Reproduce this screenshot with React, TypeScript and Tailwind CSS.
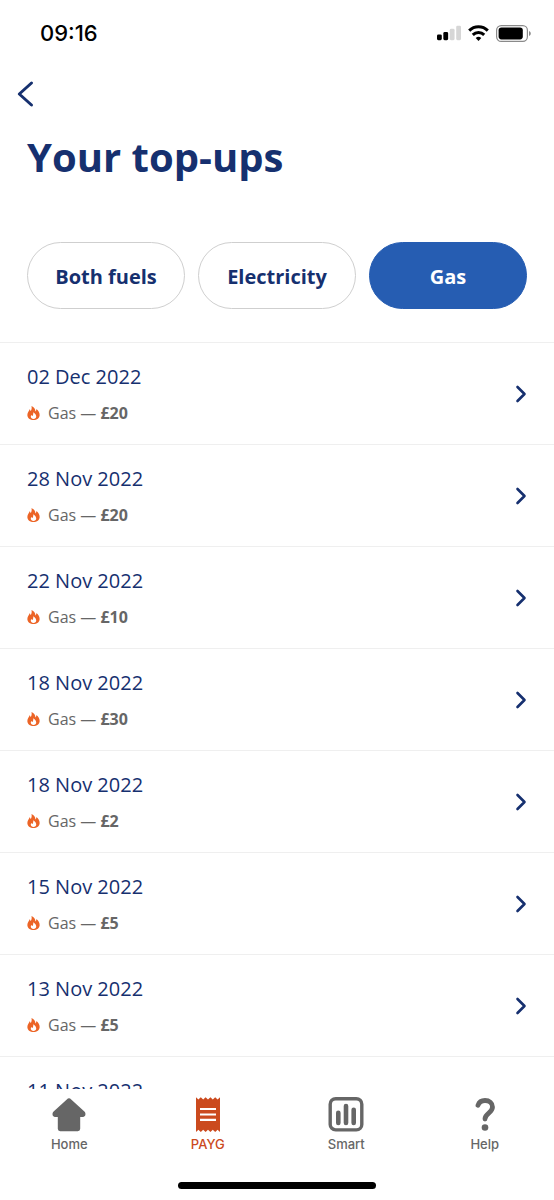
import { useState } from "react";
import clsx from "clsx";

const topUps = [
  { date: "02 Dec 2022", amount: "£20" },
  { date: "28 Nov 2022", amount: "£20" },
  { date: "22 Nov 2022", amount: "£10" },
  { date: "18 Nov 2022", amount: "£30" },
  { date: "18 Nov 2022", amount: "£2" },
  { date: "15 Nov 2022", amount: "£5" },
  { date: "13 Nov 2022", amount: "£5" },
  { date: "11 Nov 2022", amount: "£10" },
];

const filters = ["Both fuels", "Electricity", "Gas"];

function StatusBar() {
  return (
    <div className="flex h-[66px] shrink-0 items-center justify-between pr-[23px] pl-10 font-['Inter',sans-serif] text-black">
      <span className="text-[22px] leading-7 font-medium">09:16</span>
      <div className="flex items-center gap-[7px]">
        <svg width="24" height="16" viewBox="0 0 25 16">
          <rect x="0" y="9.5" width="5" height="6" rx="1.4" />
          <rect x="6.6" y="7" width="5" height="8.5" rx="1.4" />
          <rect x="13.3" y="3.7" width="5" height="11.8" rx="1.4" fill="#d6d6d6" />
          <rect x="20" y="0.4" width="5" height="15.1" rx="1.4" fill="#d6d6d6" />
        </svg>
        <svg width="21" height="16" viewBox="0 0 21 16" fill="none" stroke="#000" strokeWidth="3">
          <path d="M1.2 5.600a13.200 13.200 0 0 1 18.600 0" />
          <path d="M4.800 9.900a8.200 8.200 0 0 1 11.400 0" />
          <path d="M10.500 15.900 7.700 13a4 4 0 0 1 5.600 0z" fill="#000" stroke="none" />
        </svg>
        <svg width="35" height="17" viewBox="0 0 35 17">
          <rect x="0.6" y="0.6" width="30.8" height="15.8" rx="4.6" fill="none" stroke="#8a8a8a" strokeWidth="1.2" />
          <rect x="2.6" y="2.6" width="24.2" height="11.8" rx="2.8" />
          <path d="M33 6v5c1.100-.4 1.800-1.400 1.800-2.500S34.100 6.400 33 6z" fill="#8a8a8a" />
        </svg>
      </div>
    </div>
  );
}

function FlameIcon() {
  return (
    <svg width="13" height="14" viewBox="0 0 36 41" className="mr-2 shrink-0 text-[#ec6426]" fill="currentColor" fillRule="evenodd">
      <path d="M12 0c8 4 11.500 9 11.500 16 1.800-1 3-3.500 3-7C32.500 14 36 20 36 26c0 9-8 15-18 15S0 35 0 26C0 18 5.500 14 7.500 8.500 8 11.500 8.500 13.500 10 15 12.500 11 13.500 5 12 0zM17 18c1 4 0 8-2 11-1.200 0-2.200-1-3-3-1.200 1.500-2 3-2 5 0 4 3.500 7 8 7s8-3 8-7c0-5-3-10-9-13z" />
    </svg>
  );
}

function HomeIcon() {
  return (
    <svg width="36" height="36" viewBox="0 0 36 36" fill="currentColor">
      <path d="M15.800 2.400a3.200 3.200 0 0 1 4.400 0L33.400 14.600c1.900 1.800 1.200 5.400-1.400 5.400h-2.800v11.800a2.400 2.400 0 0 1-2.400 2.400H9.200a2.400 2.400 0 0 1-2.400-2.400V20H4c-2.600 0-3.300-3.600-1.400-5.400z" />
    </svg>
  );
}

function ReceiptIcon() {
  return (
    <svg width="36" height="36" viewBox="0 0 36 36" fill="currentColor">
      <path d="M6 .3 8.400 2.500l2.400-2.200L13.200 2.500l2.400-2.200L18 2.500l2.400-2.200L22.800 2.500l2.400-2.200L27.600 2.500 30 .3v34.600l-2.400-2.200-2.400 2.200-2.400-2.200-2.400 2.200-2.400-2.200-2.400 2.200-2.400-2.200-2.400 2.200-2.400-2.200L6 34.900z" />
      <path d="M10 12h16M10 17.500h16M10 22.800h16" stroke="#fff" strokeWidth="2.200" />
    </svg>
  );
}

function ChartIcon() {
  return (
    <svg width="36" height="36" viewBox="0 0 36 36" fill="none" stroke="currentColor" strokeLinecap="round">
      <rect x="2.200" y="1.700" width="31.600" height="31.200" rx="5.500" strokeWidth="3.400" />
      <path d="M10.300 15.800V26M18 9V26M25.700 12.700V26" strokeWidth="4.600" />
    </svg>
  );
}

function QuestionIcon() {
  return (
    <svg width="36" height="36" viewBox="0 0 36 36" fill="none" stroke="currentColor" strokeLinecap="round">
      <path d="M11 8.200C12.200 4.800 14.800 3.500 18 3.500c4.300 0 7.500 2.800 7.500 6.500 0 5.800-7.500 6.300-7.500 12" strokeWidth="4.800" />
      <circle cx="18" cy="30.500" r="3.300" fill="currentColor" stroke="none" />
    </svg>
  );
}

const tabs = [
  { label: "Home", icon: HomeIcon },
  { label: "PAYG", icon: ReceiptIcon, active: true },
  { label: "Smart", icon: ChartIcon },
  { label: "Help", icon: QuestionIcon },
];

export default function App() {
  const [filter, setFilter] = useState("Gas");

  return (
    <div className="flex h-screen flex-col bg-white font-['Open_Sans',sans-serif] text-[#16306f]">
      <StatusBar />

      <header className="shrink-0">
        <button type="button" aria-label="Back" className="flex h-14 w-14 items-center pl-4">
          <svg width="18" height="28" viewBox="0 0 18 28" fill="none" stroke="currentColor" strokeWidth="3" strokeLinecap="round" strokeLinejoin="round">
            <path d="M15.500 3 3.300 14l12.200 11" />
          </svg>
        </button>
        <h1 className="px-[27px] pt-2 text-[40px] leading-[54px] font-bold">Your top-ups</h1>
      </header>

      <div className="grid shrink-0 grid-cols-3 gap-[13px] px-[27px] pt-[58px] pb-[33px]">
        {filters.map((name) => (
          <button
            key={name}
            type="button"
            aria-pressed={filter === name}
            onClick={() => setFilter(name)}
            className={clsx(
              "h-[67px] rounded-full border pt-[2px] text-xl font-bold",
              filter === name ? "border-[#265db2] bg-[#265db2] text-white" : "border-[#cfcfcf] bg-white"
            )}
          >
            {name}
          </button>
        ))}
      </div>

      <ul className="min-h-0 flex-1 overflow-y-auto border-t border-[#efefef] [scrollbar-width:none]">
        {topUps.map((topUp, i) => (
          <li key={i} className="border-b border-[#efefef]">
            <a href="#" className="flex items-center justify-between px-[27px] pt-5 pb-[19px]">
              <div>
                <p className="text-xl leading-7">{topUp.date}</p>
                <p className="mt-[10px] flex items-center text-base leading-6 text-[#666]">
                  <FlameIcon />
                  <span>
                    Gas — <strong className="font-bold">{topUp.amount}</strong>
                  </span>
                </p>
              </div>
              <svg width="12" height="20" viewBox="0 0 12 20" fill="none" stroke="currentColor" strokeWidth="2.600" strokeLinecap="round" strokeLinejoin="round">
                <path d="M2.500 3 9.500 10l-7 7" />
              </svg>
            </a>
          </li>
        ))}
      </ul>

      <nav className="shrink-0 bg-white pt-2 font-['Inter',sans-serif]">
        <div className="grid grid-cols-4">
          {tabs.map(({ label, icon: Icon, active }) => (
            <a
              key={label}
              href="#"
              className={clsx(
                "flex flex-col items-center gap-px text-[13px] leading-5 font-medium",
                active ? "text-[#cb4a1e]" : "text-[#666]"
              )}
            >
              <Icon />
              {label}
            </a>
          ))}
        </div>
        <div className="mx-auto mt-7 mb-[11px] h-[7px] w-[198px] rounded-full bg-black" />
      </nav>
    </div>
  );
}
